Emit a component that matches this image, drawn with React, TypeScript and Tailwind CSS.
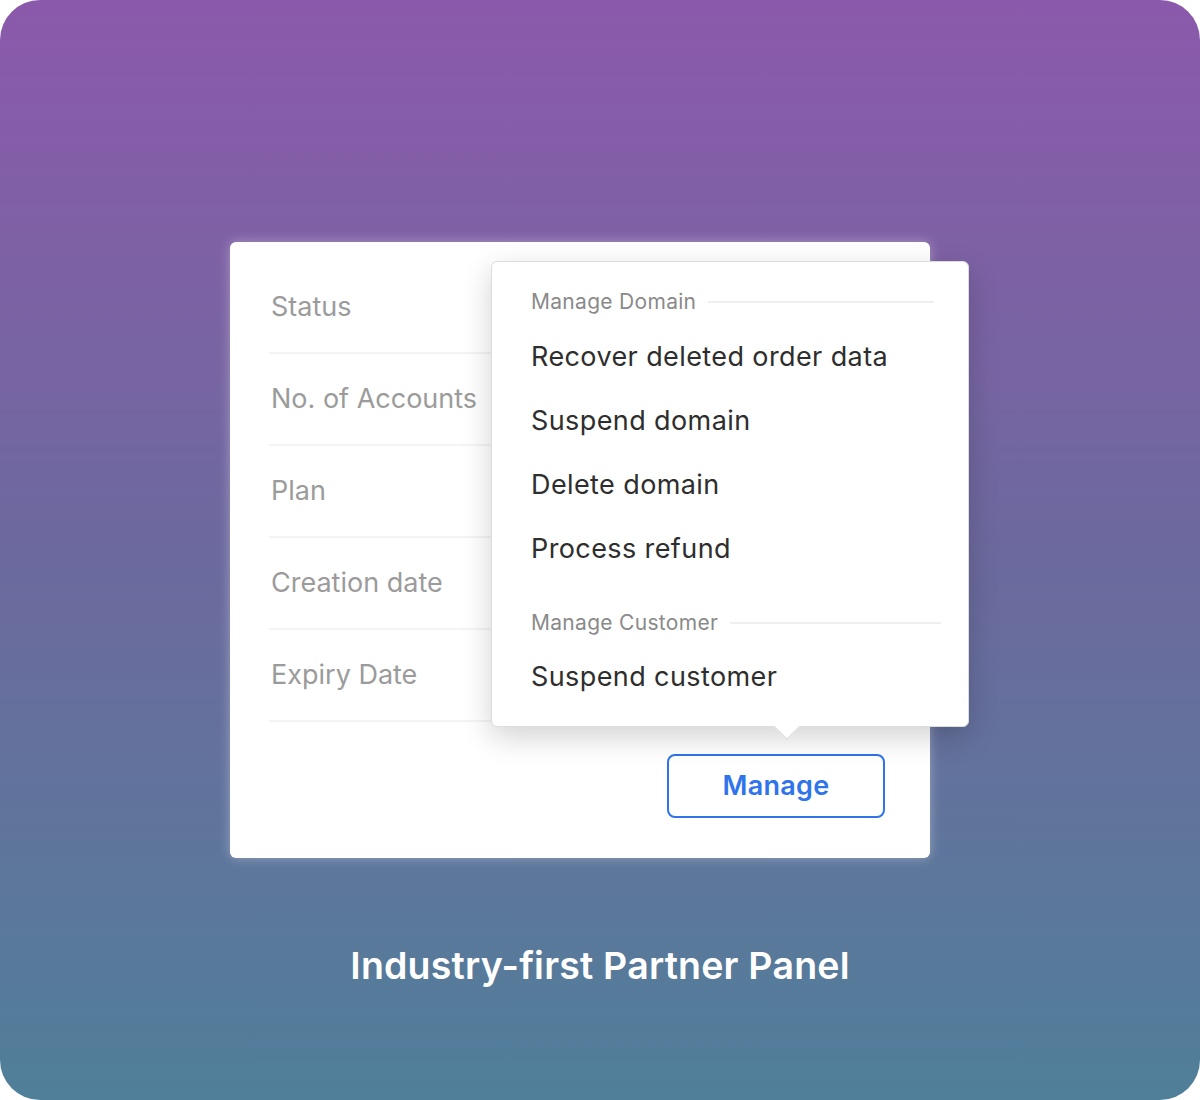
import React from "react";

const rows = ["Status", "No. of Accounts", "Plan", "Creation date", "Expiry Date"];

const MenuHeader = ({ label, lineClass }: { label: string; lineClass: string }) => (
  <div className="flex h-6 items-center gap-3">
    <span className="text-[21px] leading-6 text-[#8a8a8a] tracking-[0.3px]">{label}</span>
    <div className={`h-[2px] bg-[#efefef] ${lineClass}`} />
  </div>
);

const MenuItem = ({ label }: { label: string }) => (
  <div className="flex h-16 items-center text-[27px] text-[#2e2e2e] tracking-[0.4px]">{label}</div>
);

export default function App() {
  return (
    <div
      className="w-[1200px] h-[1100px] rounded-[40px] bg-gradient-to-b from-[#8b59ab] via-[#6c699e] to-[#4f7f99] flex flex-col items-center pt-[242px]"
      style={{ fontFamily: "Inter, 'Open Sans', sans-serif" }}
    >
      <div className="relative mr-[40px] w-[700px] h-[616px] rounded-md bg-white px-[39px] pt-[20px] shadow-[0_0_12px_rgba(255,255,255,0.35)]">
        {rows.map((r) => (
          <div key={r} className="flex h-[92px] items-center border-b-2 border-[#f4f4f4] pl-[2px]">
            <span className="text-[27px] text-[#9b9b9b]">{r}</span>
          </div>
        ))}
        <div className="flex justify-end pt-[32px] pr-[6px]">
          <button className="w-[218px] h-[64px] rounded-lg border-2 border-[#2f74ea] text-[27px] font-semibold text-[#2f74ea] tracking-[0.3px]">
            Manage
          </button>
        </div>

        {/* dropdown menu */}
        <div className="absolute left-[261px] top-[19px] w-[478px] h-[466px] rounded-md border border-[#dcdcdc] bg-white shadow-[0_10px_30px_rgba(0,0,0,0.18)]">
          <div className="absolute left-[286px] -bottom-[10px] h-[18px] w-[18px] rotate-45 bg-white border-r border-b border-[#dcdcdc]" />
          <div className="relative pl-[39px] pt-[28px]">
            <MenuHeader label="Manage Domain" lineClass="w-[226px]" />
            <div className="mt-[11px]">
              <MenuItem label="Recover deleted order data" />
              <MenuItem label="Suspend domain" />
              <MenuItem label="Delete domain" />
              <MenuItem label="Process refund" />
            </div>
            <div className="mt-[30px]">
              <MenuHeader label="Manage Customer" lineClass="w-[211px]" />
            </div>
            <div className="mt-[10px]">
              <MenuItem label="Suspend customer" />
            </div>
          </div>
        </div>
      </div>

      <h1 className="mt-[80px] text-[37.5px] font-semibold text-white tracking-[0.2px]">
        Industry-first Partner Panel
      </h1>
    </div>
  );
}
